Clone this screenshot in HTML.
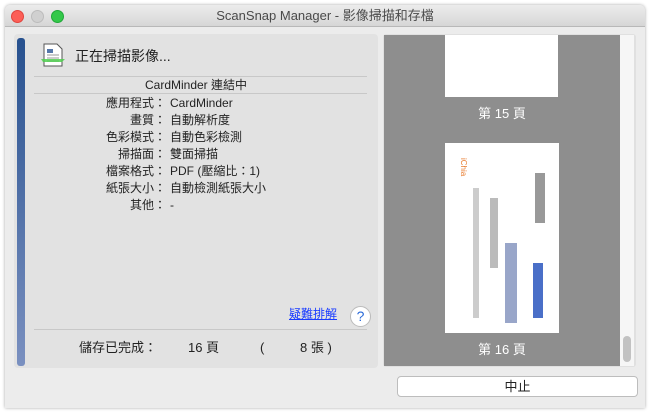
<!DOCTYPE html>
<html><head><meta charset="utf-8"><style>
body{margin:0;width:651px;height:413px;background:#fff;position:relative;overflow:hidden;font-family:"Liberation Sans","Noto Sans CJK TC",sans-serif;font-size:12px;color:#222;line-height:17px}
.win{position:absolute;left:5px;top:5px;width:640px;height:403px;background:#ececec;box-shadow:0 0 3px rgba(0,0,0,.35);border-radius:5px 5px 0 0}
.title{position:absolute;left:0;top:0;width:640px;height:21px;background:linear-gradient(#ececec,#d6d6d6);border-bottom:1px solid #b8b8b8;border-radius:5px 5px 0 0;text-align:center;line-height:21px;font-size:13px;color:#4a4a4a}
.dot{position:absolute;top:5px;width:12px;height:12px;border-radius:50%}
.a{position:absolute;white-space:nowrap}
.lp{position:absolute;left:14px;top:34px;width:364px;height:334px;background:#e2e2e2;border-radius:4px}
.bar{position:absolute;left:3px;top:4px;width:8px;height:328px;background:linear-gradient(#27518f,#7a90c0);border-radius:3px}
.hr{position:absolute;left:20px;width:333px;height:1px;background:#c8c8c8}
.lbl{position:absolute;right:212px;text-align:right}
.val{position:absolute;left:156px}
</style></head><body>
<div class="win">
<div class="title">ScanSnap Manager - 影像掃描和存檔
<div class="dot" style="left:6px;background:#fc5f57;border:1px solid #e0443e;width:11px;height:11px"></div>
<div class="dot" style="left:26px;background:#d0d0d0;border:1px solid #bcbcbc;width:11px;height:11px"></div>
<div class="dot" style="left:46px;background:#34c84a;border:1px solid #20a838;width:11px;height:11px"></div>
</div>
</div>
<div class="lp">
<div class="bar"></div>
<svg style="position:absolute;left:27px;top:8px" width="26" height="26"><path d="M3 2h13l5 5v17H3z" fill="#fff" stroke="#555"/><rect x="6" y="7" width="6" height="4" fill="#5577aa"/><path d="M6 13h12M6 16h12M6 19h12" stroke="#999"/><path d="M0 17h24l-3 3H2z" fill="#4fcf4f" opacity=".85"/></svg>
<div class="a" style="left:61px;top:14px;font-size:14px">正在掃描影像...</div>
<div class="hr" style="top:42px"></div>
<div class="a" style="left:0;width:364px;text-align:center;top:43px">CardMinder 連結中</div>
<div class="hr" style="top:59px"></div>
<div class="lbl" style="top:61px">應用程式：</div><div class="val" style="top:61px">CardMinder</div>
<div class="lbl" style="top:78px">畫質：</div><div class="val" style="top:78px">自動解析度</div>
<div class="lbl" style="top:95px">色彩模式：</div><div class="val" style="top:95px">自動色彩檢測</div>
<div class="lbl" style="top:112px">掃描面：</div><div class="val" style="top:112px">雙面掃描</div>
<div class="lbl" style="top:129px">檔案格式：</div><div class="val" style="top:129px">PDF (壓縮比：1)</div>
<div class="lbl" style="top:146px">紙張大小：</div><div class="val" style="top:146px">自動檢測紙張大小</div>
<div class="lbl" style="top:163px">其他：</div><div class="val" style="top:163px">-</div>
<div class="a" style="left:275px;top:272px;color:#1a3cff;text-decoration:underline">疑難排解</div>
<div class="a" style="left:336px;top:272px;width:19px;height:19px;border-radius:50%;background:#fff;border:1px solid #bbb;text-align:center;line-height:19px;color:#2a6ad8;font-size:14px">?</div>
<div class="hr" style="top:295px"></div>
<div class="a" style="left:65px;top:305px;font-size:13px">儲存已完成：</div>
<div class="a" style="left:174px;top:305px;font-size:13px">16 頁</div>
<div class="a" style="left:246px;top:305px;font-size:13px">(</div>
<div class="a" style="left:286px;top:305px;font-size:13px">8 張 )</div>
</div>
<div class="a" style="left:383px;top:34px;width:253px;height:333px;background:#e0e0e0;border-radius:3px"></div>
<div class="a" style="left:384px;top:35px;width:236px;height:331px;background:#8e8e8e"></div>
<div class="a" style="left:620px;top:35px;width:14px;height:331px;background:#f6f6f6"></div>
<div class="a" style="left:623px;top:336px;width:8px;height:26px;background:#c2c2c2;border-radius:4px"></div>
<div class="a" style="left:445px;top:35px;width:113px;height:62px;background:#fff"></div>
<div class="a" style="left:384px;top:105px;width:236px;text-align:center;color:#fff;font-size:13px">第 15 頁</div>
<div class="a" style="left:445px;top:143px;width:114px;height:190px;background:#fff">
<div class="a" style="left:10px;top:15px;font-size:8px;color:#e87d30;writing-mode:vertical-rl">iChia</div>
<div class="a" style="left:45px;top:55px;width:8px;height:70px;background:#bbb"></div>
<div class="a" style="left:28px;top:45px;width:6px;height:130px;background:#ccc"></div>
<div class="a" style="left:88px;top:120px;width:10px;height:55px;background:#4a6fc8"></div>
<div class="a" style="left:60px;top:100px;width:12px;height:80px;background:#99a6c9"></div>
<div class="a" style="left:90px;top:30px;width:10px;height:50px;background:#999"></div>
</div>
<div class="a" style="left:384px;top:341px;width:236px;text-align:center;color:#fff;font-size:13px">第 16 頁</div>
<div class="a" style="left:397px;top:376px;width:239px;height:19px;background:#fff;border:1px solid #bdbdbd;border-radius:4px;text-align:center;line-height:19px;font-size:13px">中止</div>
</body></html>
